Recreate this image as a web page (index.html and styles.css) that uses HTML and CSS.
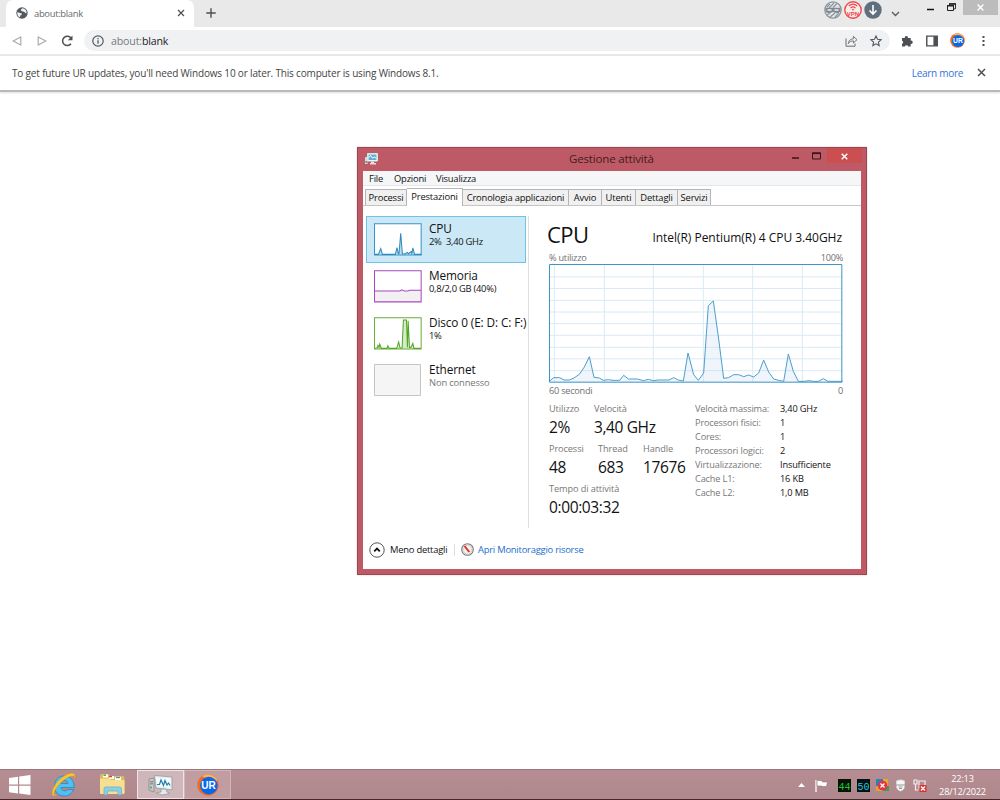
FILE: index.html
```html
<!DOCTYPE html>
<html lang="it">
<head>
  <meta charset="UTF-8">
  <title>about:blank</title>
  <link rel="stylesheet" href="styles.css">
</head>
<body>
  <header class="browser">
    <div class="tab-strip">
      <div class="browser-tab">
        <svg class="globe" width="12" height="12" viewBox="0 0 12 12"><circle cx="6" cy="6" r="5.7" fill="#55595e"/><path d="M1.3 5.4c1.500-.3 2 .8 3.700.8 1.300 0 1.200 1.500 0 1.800s-.5 2-1.200 2.300A5 5 0 0 1 1.300 5.400zM6.500 1.300c-1 .8-1.900 1-1.600 2S6.500 4.400 7.800 4.700 9 6.700 10.600 6A4.800 4.800 0 0 0 6.500 1.300z" fill="#f1f1f1"/></svg>
        <span class="browser-tab-title">about:blank</span>
        <svg width="8" height="8" viewBox="0 0 8 8"><path d="M1 1l6 6M7 1L1 7" stroke="#4c4f53" stroke-width="1.2"/></svg>
      </div>
      <svg class="new-tab" width="10" height="10" viewBox="0 0 10 10"><path d="M5 .3v9.4M.3 5h9.4" stroke="#4c4f53" stroke-width="1.4"/></svg>
      <div class="strip-icons">
        <svg width="18" height="18" viewBox="0 0 18 18"><circle cx="9" cy="9" r="8.2" fill="#e3e6e8" stroke="#8a949d" stroke-width="1.2"/><path d="M3 6l3-3M5 7l5-5M9 6.500l4-4M3 14l3-2M6 16l5-4M11 16l4-4" stroke="#8a949d" stroke-width="1.2"/><path d="M1.500 6.800h15v3.700c-2 2-5 2-7.500.3-2.500 1.700-5.500 1.700-7.500-.3z" fill="#7f8a93"/><path d="M3.500 9h4M10.500 9h4" stroke="#eef0f1" stroke-width="1.6"/></svg>
        <svg width="18" height="18" viewBox="0 0 18 18"><circle cx="9" cy="9" r="8.2" fill="#f7eded" stroke="#f04848" stroke-width="1.4"/><path d="M4.800 5c2.500-2.300 5.900-2.300 8.400 0M6.500 7.100c1.500-1.400 3.500-1.400 5 0" fill="none" stroke="#f04848" stroke-width="1.2"/><circle cx="9" cy="8.600" r=".9" fill="#f04848"/><text class="vpn" x="9" y="15" text-anchor="middle">VPN</text></svg>
        <svg width="18" height="18" viewBox="0 0 18 18"><circle cx="9" cy="9" r="8.700" fill="#5f6f7d"/><path d="M9 4v9M5.500 9.500L9 13l3.500-3.500" fill="none" stroke="#fff" stroke-width="1.6"/></svg>
        <svg class="chevron" width="9" height="6" viewBox="0 0 9 6"><path d="M1 1l3.500 3.500L8 1" fill="none" stroke="#5b5e61" stroke-width="1.4"/></svg>
      </div>
      <div class="browser-controls">
        <svg width="7" height="15" viewBox="0 0 7 15"><path d="M0 9.500h7" stroke="#111" stroke-width="1.5"/></svg>
        <svg width="9" height="15" viewBox="0 0 9 15"><path d="M2.500 5.500V3.800h6v5H7" fill="none" stroke="#333"/><path d="M.5 5.500h6v5h-6z" fill="none" stroke="#222"/><path d="M0 5.700h7M2 4h7" stroke="#222" stroke-width="1.4"/></svg>
        <div class="browser-close"><svg width="7" height="7" viewBox="0 0 7 7"><path d="M.6.6l5.800 5.800M6.400.6L.6 6.400" stroke="#fff" stroke-width="1.4"/></svg></div>
      </div>
    </div>

    <div class="toolbar">
      <svg width="10" height="10" viewBox="0 0 10 10"><path d="M8.800 1v8L1.200 5z" fill="none" stroke="#a9abae" stroke-width="1.2"/></svg>
      <svg class="forward" width="10" height="10" viewBox="0 0 10 10"><path d="M1.200 1v8L8.800 5z" fill="none" stroke="#a9abae" stroke-width="1.2"/></svg>
      <svg class="reload" width="12" height="12" viewBox="0 0 12 12"><path d="M10.200 3.300A4.700 4.700 0 1 0 10 8.800" fill="none" stroke="#4c4f53" stroke-width="1.5"/><path d="M11.500.5v4.800H6.800z" fill="#4c4f53"/></svg>
      <div class="omnibox">
        <svg width="12" height="12" viewBox="0 0 12 12"><circle cx="6" cy="6" r="5.2" fill="none" stroke="#55595e" stroke-width="1.2"/><path d="M6 5.300v3.500M6 3v1.300" stroke="#55595e" stroke-width="1.3"/></svg>
        <span class="url"><i>about:</i>blank</span>
        <svg class="share" width="13" height="12" viewBox="0 0 13 12"><path d="M1 3.500v7.700h9V8.500" fill="none" stroke="#686b70"/><path d="M3.300 8.600C3.700 5.300 5.700 3.900 8.400 3.800V1.300L12 4.700 8.400 8V5.900C6 5.900 4.500 6.800 3.300 8.600z" fill="none" stroke="#686b70" stroke-width=".9"/></svg>
        <svg width="12" height="12" viewBox="0 0 12 12"><path d="M6 1l1.500 3.300 3.600.4-2.700 2.400.8 3.500L6 8.800l-3.200 1.800.8-3.500L.9 4.700l3.600-.4z" fill="none" stroke="#55595e" stroke-width="1.1"/></svg>
      </div>
      <svg class="puzzle" width="12" height="12" viewBox="0 0 12 12"><path d="M1 3h2.800a1.600 1.600 0 1 1 3.100 0h2.800v2.700a1.600 1.600 0 1 1 0 3.100v2.700H7.200a1.700 1.700 0 0 0-3.300 0H1V8.800a1.600 1.600 0 0 0 0-3.100z" fill="#4c4f53"/></svg>
      <svg class="side-panel" width="12" height="12" viewBox="0 0 11 11"><path d="M.7 1h9.600v9H.7z" fill="#fff" stroke="#4c4f53" stroke-width="1.3"/><path d="M6.800 1h3.500v9H6.800z" fill="#4c4f53"/></svg>
      <svg class="avatar" width="15" height="15" viewBox="0 0 22 22"><circle cx="11" cy="11" r="10.700" fill="#f26b21"/><path d="M5 2.200A10.700 10.700 0 0 1 20.500 6L18 8z" fill="#ffb05a"/><circle cx="11.800" cy="11.600" r="8.800" fill="#0968e8"/><text class="ur-mark" x="11.600" y="15" text-anchor="middle">UR</text></svg>
      <svg width="3" height="12" viewBox="0 0 3 12"><path d="M.5 1h2v2h-2zM.5 5h2v2h-2zM.5 9h2v2h-2z" fill="#4c4f53"/></svg>
    </div>

    <div class="infobar">
      <span class="info-text">To get future UR updates, you'll need Windows 10 or later. This computer is using Windows 8.1.</span>
      <a class="learn-more">Learn more</a>
      <svg width="9" height="9" viewBox="0 0 9 9"><path d="M1 1l7 7M8 1L1 8" stroke="#4c4f53" stroke-width="1.5"/></svg>
    </div>
  </header>

  <main class="page"></main>

  <section class="window">
    <div class="title-bar">
      <svg class="app-icon" width="13" height="12" viewBox="0 0 13 12"><path d="M0 4h2.500v7H0z" fill="#d5d9da"/><path d="M.5 8h1.500v2H.5z" fill="#5f9b6b"/><path d="M2.500.5h10v7.500h-10z" fill="#fff" stroke="#d5e6eb"/><path d="M3.500 1.500h8v5.500h-8z" fill="#63add0"/><path d="M4 4.500l1.500-2L7.500 5l2-1 2 1.500" fill="none" stroke="#fff"/><path d="M6 8.500h3v1.500h2v1.500H5V10h1z" fill="#dce1e2"/></svg>
      <h1>Gestione attività</h1>
      <div class="window-controls">
        <svg width="7" height="9" viewBox="0 0 7 9"><path d="M0 6h7" stroke="#35181c" stroke-width="1.5"/></svg>
        <svg width="9" height="9" viewBox="0 0 9 9"><path d="M.5 1h8v6h-8z" fill="none" stroke="#35181c"/><path d="M0 1.300h9" stroke="#35181c" stroke-width="1.6"/></svg>
        <div class="window-close"><svg width="7" height="7" viewBox="0 0 7 7"><path d="M.7.7l5.600 5.600M6.300.7L.7 6.300" stroke="#fff" stroke-width="1.4"/></svg></div>
      </div>
    </div>

    <div class="window-body">
      <nav class="menu"><span class="m-file">File</span><span class="m-options">Opzioni</span><span>Visualizza</span></nav>
      <div class="tabs">
        <div class="tab t1">Processi</div>
        <div class="tab t2 active">Prestazioni</div>
        <div class="tab t3">Cronologia applicazioni</div>
        <div class="tab t4">Avvio</div>
        <div class="tab t5">Utenti</div>
        <div class="tab t6">Dettagli</div>
        <div class="tab t7">Servizi</div>
      </div>

      <div class="content">
        <aside class="resources">
          <div class="resource selected">
            <svg width="48" height="33" viewBox="42 39 142 96"><path class="plot" d="M43.500 40.500h138v92h-138z" fill="#fff" stroke="#3b93c5"/><path class="plot" d="M44 131h11l7-17 5 17h38l5-20 4 18h2l5-60 5 60 7 1 8-5 3 4 8-6 2 5 3-16 5 19h21" fill="#bddcea" stroke="#2f8bbf"/></svg>
            <div class="resource-text"><h2>CPU</h2><p>2%&nbsp; 3,40 GHz</p></div>
          </div>
          <div class="resource">
            <svg width="48" height="33" viewBox="42 180 142 96"><path d="M43.500 241h75l5-3 8 3h10l5-2h35v34h-138z" fill="#f3f0f4"/><path class="plot" d="M43.500 181.500h138v92h-138zM44 241h75l5-3 8 3h10l5-2h35" fill="none" stroke="#a848bf"/></svg>
            <div class="resource-text"><h2>Memoria</h2><p>0,8/2,0 GB (40%)</p></div>
          </div>
          <div class="resource">
            <svg width="48" height="33" viewBox="42 321 142 96"><path class="plot" d="M43.500 322.500h138v92h-138z" fill="#fff" stroke="#69ad3b"/><path class="plot" d="M44 413l8-2 2-7 3 6 2-10 5 13h16l3-8 4 8h22l6-19 4 18h6l4-83h9l3 81 2-79 4 80 5-2 5-11 3 15h20" fill="#d5eac9" stroke="#51a624"/></svg>
            <div class="resource-text"><h2>Disco 0 (E: D: C: F:)</h2><p>1%</p></div>
          </div>
          <div class="resource">
            <svg width="48" height="33" viewBox="0 0 48 33"><path d="M.5.5h46v31H.5z" fill="#f5f5f5" stroke="#c5c5c5"/></svg>
            <div class="resource-text"><h2>Ethernet</h2><p class="off">Non connesso</p></div>
          </div>
        </aside>

        <div class="details">
          <div class="details-head"><h3>CPU</h3><span>Intel(R) Pentium(R) 4 CPU 3.40GHz</span></div>
          <div class="axis"><span>% utilizzo</span><span>100%</span></div>
          <svg class="graph" width="294" height="119" viewBox="27 27 882 357">
            <path d="M29 65.500h876M29 100.500h876M29 136h876M29 171h876M29 206h876M29 241h876M29 277h876M29 311.500h876M29 347h876M43 29v352M193 29v352M340 29v352M490 29v352M638 29v352M787 29v352" fill="none" stroke="#d9eaf4" stroke-width="3"/>
            <path d="M29 378l12-10h18l13 7h16l14-6 16-11 15-22 15-31 14 62 16 2 12 7 15-2 14 2h20l12-15 14 11h28l17 5 15-4 15 4 15-2h32l14-7 14 7 15 3 14-84 17 65 14 17 16-22 14-202 15-14 16 114 15 118 15-2 15-9h15l15 6 15-5 15 6 15-12 15-39 15 36 15 21 15 4 15 3 14-82 15 52 15 30h18l14-2 14 2h14l15-8 14 8h44v4H29z" fill="#bed8ea" fill-opacity=".25"/>
            <path class="plot" d="M29 378l12-10h18l13 7h16l14-6 16-11 15-22 15-31 14 62 16 2 12 7 15-2 14 2h20l12-15 14 11h28l17 5 15-4 15 4 15-2h32l14-7 14 7 15 3 14-84 17 65 14 17 16-22 14-202 15-14 16 114 15 118 15-2 15-9h15l15 6 15-5 15 6 15-12 15-39 15 36 15 21 15 4 15 3 14-82 15 52 15 30h18l14-2 14 2h14l15-8 14 8h44" fill="none" stroke="#4c9fcd"/>
            <path class="plot" d="M28.500 28.500h877v353h-877z" fill="none" stroke="#3e94c5"/>
          </svg>
          <div class="axis below"><span>60 secondi</span><span>0</span></div>
          <div class="stats">
            <div class="stats-main">
              <div class="stat-row">
                <div class="stat s-use"><label>Utilizzo</label><b>2%</b></div>
                <div class="stat"><label>Velocità</label><b>3,40 GHz</b></div>
              </div>
              <div class="stat-row">
                <div class="stat s-proc"><label>Processi</label><b>48</b></div>
                <div class="stat s-thread"><label>Thread</label><b>683</b></div>
                <div class="stat"><label>Handle</label><b>17676</b></div>
              </div>
              <div class="stat-row">
                <div class="stat"><label>Tempo di attività</label><b>0:00:03:32</b></div>
              </div>
            </div>
            <dl class="specs">
              <dt>Velocità massima:</dt><dd>3,40 GHz</dd>
              <dt>Processori fisici:</dt><dd>1</dd>
              <dt>Cores:</dt><dd>1</dd>
              <dt>Processori logici:</dt><dd>2</dd>
              <dt>Virtualizzazione:</dt><dd>Insufficiente</dd>
              <dt>Cache L1:</dt><dd>16 KB</dd>
              <dt>Cache L2:</dt><dd>1,0 MB</dd>
            </dl>
          </div>
        </div>
      </div>

      <footer class="window-footer">
        <svg width="16" height="16" viewBox="0 0 16 16"><circle cx="8" cy="8" r="7.200" fill="#fff" stroke="#555"/><path d="M5.200 9.300L8 6.500l2.800 2.800" fill="none" stroke="#111" stroke-width="1.8"/></svg>
        <span class="less">Meno dettagli</span>
        <i class="divider"></i>
        <svg width="13" height="13" viewBox="0 0 13 13"><circle cx="6.500" cy="6.500" r="5.800" fill="#f5f2ec" stroke="#777" stroke-width="1.1"/><circle cx="6.500" cy="6.500" r="4.300" fill="none" stroke="#b9b2a8" stroke-dasharray="1 1"/><path d="M3.500 3l4.800 6" stroke="#df302d" stroke-width="2"/></svg>
        <a>Apri Monitoraggio risorse</a>
      </footer>
    </div>
  </section>

  <div class="taskbar">
    <div class="task start"><svg width="22" height="20" viewBox="0 0 22 20"><path d="M0 3l9-1.300v7.800H0zM10.200 1.500L21.500 0v9.500H10.200zM0 10.700h9v7.800L0 17.200zM10.200 10.700h11.300V20l-11.300-1.500z" fill="#fff"/></svg></div>
    <div class="task ie"><svg width="26" height="26" viewBox="0 0 26 26"><path d="M22.800 17.500C21 21.500 17.700 24 13.200 24 7.300 24 3.500 20 3.500 14.200S7.500 4 13.200 4s10 4 10 11.500H10c.2 2 1.600 3.300 3.800 3.300 1.500 0 2.500-.4 3.200-1.300zM10 11.500h7c-.2-2-1.500-3-3.400-3s-3.300 1-3.600 3z" fill="#4fc0f0" stroke="#2389c6" stroke-width=".8"/><path d="M2 23.500C-1.500 20 5.500 9 12.500 4.500S25.500 0 23.700 6.500C24.500 3 19.500 3.200 13.500 7.500S3 18.500 3 21.500c0 1 1 1.700 3 .8-1.300 1.300-3 2-4 1.200z" fill="#fbc62c" stroke="#dd9d1c" stroke-width=".5"/></svg></div>
    <div class="task folder"><svg width="25" height="23" viewBox="0 0 25 23"><path d="M0 2.500Q0 1 1.500 1H8l2 2h13q1.500 0 1.500 1.500V20q0 1-1.500 1H1.500Q0 21 0 20z" fill="#dfbb56"/><path d="M3 1.500h5v3H3z" fill="#fff"/><path d="M3.500 1.500H6V3H3.500z" fill="#3bb44a"/><path d="M9 3h5v3H9z" fill="#fff"/><path d="M9 3h3v1.300H9z" fill="#d3472f"/><path d="M15 4h6v3h-6z" fill="#fff"/><path d="M16 4h4v1.200h-4z" fill="#4b91ce"/><path d="M0 5.500h9l2 1.500h13.500V20q0 1-1.500 1H1.500Q0 21 0 20z" fill="#f6df8e"/><path d="M4 22v-6q0-2 2-2h13.500q2 0 2 2v6H18v-4H7.500v4z" fill="#8bcfe7" stroke="#5eaed0" stroke-width=".7"/></svg></div>
    <div class="task open manager"><svg width="25" height="22" viewBox="0 0 25 22"><path d="M1 5l5-1v14l-5-2z" fill="#c6cccd" stroke="#7d8385" stroke-width=".7"/><path d="M2 8l3-.5M2 10l3-.3" stroke="#777"/><path d="M2 12.500h2v2H2z" fill="#52b265"/><path d="M6.500 1.500L24 3v13L8 14z" fill="#e9eded" stroke="#8d9699" stroke-width=".7"/><path d="M8 3.500l14.300 1v9.300L9.200 12.300z" fill="#f6fcff"/><path d="M9 10.500h2.500L13 6l2.500 5.500L17 6.500l2 4.500 1.500-2 1.500 2.500" fill="none" stroke="#237eaf" stroke-width="1.2"/><path d="M13 15h5l1 3 3 1.500L14 21l-6-2 5-1z" fill="#e4e8e8" stroke="#8d9699" stroke-width=".7"/></svg></div>
    <div class="task open ur"><svg width="22" height="22" viewBox="0 0 22 22"><circle cx="11" cy="11" r="10.700" fill="#f26b21"/><path d="M5 2.200A10.700 10.700 0 0 1 20.500 6L18 8z" fill="#ffb05a"/><circle cx="11.800" cy="11.600" r="8.800" fill="#0968e8"/><text class="ur-mark" x="11.600" y="15" text-anchor="middle">UR</text></svg></div>
    <div class="tray">
      <svg class="tray-up" width="7" height="4" viewBox="0 0 7 4"><path d="M3.500 0L7 4H0z" fill="#fff"/></svg>
      <svg class="flag" width="13" height="13" viewBox="0 0 13 13"><path d="M1 1v12" stroke="#f5eeee" stroke-width="1.5"/><path d="M2 1.500h4.500L7.500 3h5L11.500 7.500H7.500L6.500 7H2z" fill="#fff" stroke="#917277" stroke-width=".6"/></svg>
      <svg class="meter" width="13" height="13" viewBox="0 0 13 13"><path d="M0 0h13v13H0z" fill="#071207"/><text class="digits" x="6.500" y="10.500" text-anchor="middle" fill="#16c936">44</text></svg>
      <svg class="meter" width="13" height="13" viewBox="0 0 13 13"><path d="M0 0h13v13H0z" fill="#061013"/><text class="digits" x="6.500" y="10.500" text-anchor="middle" fill="#22c9df">50</text></svg>
      <svg class="multi" width="13" height="13" viewBox="0 0 13 13"><path d="M0 0h7v7H0z" fill="#2883bd"/><path d="M7 0h5v7H7z" fill="#e9a826"/><path d="M0 7h6v5H0z" fill="#e5a129"/><path d="M7 7h6v5H7z" fill="#4d9551"/><circle cx="6.500" cy="6.500" r="4.800" fill="#df3544"/><path d="M4.500 4.500l4 4M8.500 4.500l-4 4" stroke="#fff" stroke-width="1.2"/></svg>
      <svg class="shield" width="11" height="13" viewBox="0 0 11 13"><path d="M1 1.500q4.500-2 9 0v5q0 4.500-4.500 6Q1 11 1 6.500z" fill="#f6f6f6" stroke="#a69b9d" stroke-width=".7"/><path d="M1 6h9M3.500 8h4M4 9.500h3" stroke="#999"/></svg>
      <svg class="network" width="14" height="13" viewBox="0 0 14 13"><path d="M1 1h3v4H1zM2.500 5v6h3M6 2h6v7H6z" fill="none" stroke="#f4eded" stroke-width="1.2"/><path d="M6.500 6h7v7h-7z" fill="#df3030"/><path d="M8 7.500l4 4M12 7.500l-4 4" stroke="#fff" stroke-width="1.4"/></svg>
      <div class="clock"><span>22:13</span><span>28/12/2022</span></div>
    </div>
  </div>
</body>
</html>
```
FILE: styles.css
```css
* {
  box-sizing: border-box;
}
body {
  margin: 0;
  width: 1000px;
  height: 800px;
  overflow: hidden;
  display: flex;
  flex-direction: column;
  position: relative;
  background: #fff;
  font-family: "Open Sans", "Noto Sans", sans-serif;
  font-size: 10px;
  color: #222;
}
svg {
  display: block;
  flex: none;
}
span, a, h1, h2, h3, p, label, b {
  white-space: nowrap;
}
h1, h2, h3, p, dl, dd {
  margin: 0;
  font-weight: normal;
}
.plot {
  stroke-width: 3;
}

/* Browser */
.tab-strip {
  height: 27px;
  padding-left: 6px;
  display: flex;
  background: #e9e9e9;
}
.browser-tab {
  width: 188px;
  height: 27px;
  padding: 0 9px 1px 10px;
  display: flex;
  align-items: center;
  background: #fff;
  border-radius: 7px 7px 0 0;
}
.browser-tab-title {
  flex: 1;
  margin-left: 6px;
  font-size: 9.4px;
  letter-spacing: -0.3px;
  color: #66696d;
}
.new-tab {
  margin: 8px 0 0 12px;
}
.strip-icons {
  display: flex;
  gap: 2px;
  margin: 1px 0 0 auto;
}
.chevron {
  margin: 10px 0 0 7px;
}
.browser-controls {
  display: flex;
  margin-left: 27px;
  gap: 13px;
}
.browser-close {
  width: 35px;
  height: 15px;
  margin: 0 2px 0 -6px;
  display: flex;
  align-items: center;
  justify-content: center;
  background: #bcbcbc;
}
.toolbar {
  height: 29px;
  padding: 0 15px 0 12px;
  display: flex;
  align-items: center;
  border-bottom: 2px solid #e7e8e9;
}
.forward {
  margin-left: 15px;
}
.reload {
  margin: 0 11px 0 14px;
}
.omnibox {
  width: 806px;
  height: 21px;
  padding: 0 8px;
  display: flex;
  align-items: center;
  background: #f0f1f3;
  border-radius: 11px;
}
.url {
  flex: 1;
  margin-left: 7px;
  font-size: 10.6px;
  letter-spacing: -0.15px;
}
.url i {
  font-style: normal;
  color: #777a7e;
}
.share {
  margin-right: 12px;
}
.puzzle {
  margin-left: 11px;
}
.side-panel {
  margin: 0 12px 0 13px;
}
.avatar {
  margin-right: auto;
}
.infobar {
  height: 36px;
  padding: 0 14px 1px 12px;
  display: flex;
  align-items: center;
  border-bottom: 2px solid #b7bab8;
  box-shadow: 0 1px 2px #ddd;
}
.info-text {
  flex: 1;
  font-size: 10px;
  letter-spacing: -0.17px;
  color: #444;
}
.learn-more {
  margin-right: 14px;
  font-size: 10px;
  letter-spacing: -0.3px;
  color: #3474dc;
}
.page {
  flex: 1;
}

/* Task manager window */
.window {
  position: absolute;
  left: 357px;
  top: 147px;
  width: 510px;
  height: 428px;
  padding: 0 5px 5px;
  background: #bd5a65;
  border: 1px solid #9e4550;
  box-shadow: 0 0 2px #ccc;
}
.title-bar {
  height: 23px;
  display: flex;
}
.app-icon {
  margin: 5px 0 0 2px;
}
.title-bar h1 {
  flex: 1;
  margin: 1px 0 0 191px;
  font-size: 11.5px;
  line-height: 19px;
  letter-spacing: -0.15px;
  color: #431d22;
}
.window-controls {
  display: flex;
  gap: 13px;
  margin-right: -1px;
  padding-top: 4px;
}
.window-close {
  width: 35px;
  height: 15px;
  margin: -4px 0 0 -7px;
  display: flex;
  align-items: center;
  justify-content: center;
  background: #cb4e50;
}
.window-close svg {
  margin-top: 1px;
}
.window-body {
  height: 398px;
  display: flex;
  flex-direction: column;
  background: #fff;
  color: #111;
}
.menu {
  height: 15px;
  padding-left: 6px;
  display: flex;
  background: #f5f6f7;
  border-bottom: 1px solid #e5e6e7;
  font-size: 9.4px;
  line-height: 15px;
  letter-spacing: -0.2px;
}
.m-file {
  width: 25px;
}
.m-options {
  width: 42px;
}
.tabs {
  height: 20px;
  padding-left: 2px;
  display: flex;
  align-items: flex-end;
  border-bottom: 1px solid #c5c5c5;
}
.tab {
  height: 16px;
  border: 1px solid #b5b5b5;
  border-left: 0;
  border-bottom: 0;
  background: #f0f0f0;
  font-size: 9.4px;
  line-height: 16px;
  letter-spacing: -0.17px;
  text-align: center;
  white-space: nowrap;
}
.t1 { width: 42px; border-left: 1px solid #b5b5b5; }
.t2 { width: 56px; }
.t3 { width: 106px; }
.t4 { width: 33px; }
.t5 { width: 34px; }
.t6 { width: 42px; }
.t7 { width: 33px; }
.tab.active {
  height: 18px;
  margin-bottom: -1px;
  background: #fff;
}
.content {
  height: 326px;
  display: flex;
}
.resources {
  width: 166px;
  height: 312px;
  margin-top: 10px;
  padding-left: 3px;
  border-right: 1px solid #dedede;
}
.resource {
  width: 160px;
  height: 47px;
  padding: 7px 0 0 8px;
  display: flex;
}
.resource.selected {
  outline: 1px solid #70c2e6;
  outline-offset: -1px;
  background: #cbe8f6;
}
.resource-text {
  margin: -1px 0 0 7px;
}
.resource h2 {
  font-size: 11.8px;
  line-height: 13px;
  letter-spacing: -0.12px;
}
.resource p {
  font-size: 9.4px;
  line-height: 13px;
  letter-spacing: -0.27px;
}
.resource p.off {
  color: #777;
  letter-spacing: -0.15px;
}
.details {
  width: 294px;
  margin-left: 20px;
}
.details-head {
  height: 45px;
  padding: 13px 1px 0 0;
  margin-left: -2px;
  display: flex;
  justify-content: space-between;
}
.details-head h3 {
  font-size: 22px;
  line-height: 30px;
  letter-spacing: -0.6px;
}
.details-head span {
  padding-top: 9px;
  font-size: 12px;
  line-height: 20px;
  letter-spacing: -0.03px;
}
.axis {
  height: 13px;
  display: flex;
  justify-content: space-between;
  font-size: 9.2px;
  line-height: 13px;
  letter-spacing: -0.25px;
  color: #707070;
}
.axis.below {
  height: 19px;
  line-height: 15px;
}
.stats {
  display: flex;
}
.stats-main {
  width: 146px;
}
.stat-row {
  height: 40px;
  display: flex;
}
.stat label, .stat b {
  display: block;
}
.stat label {
  font-size: 9.2px;
  line-height: 13px;
  letter-spacing: -0.1px;
  color: #777;
}
.stat b {
  font-size: 15.5px;
  font-weight: normal;
  line-height: 24px;
  letter-spacing: -0.38px;
}
.s-use { width: 45px; }
.s-proc { width: 49px; }
.s-thread { width: 45px; }
.specs {
  display: grid;
  grid-template-columns: 85px 62px;
  grid-auto-rows: 14px;
  align-content: start;
  font-size: 9.2px;
  line-height: 13px;
  letter-spacing: -0.15px;
  white-space: nowrap;
}
.specs dt {
  color: #777;
}
.window-footer {
  flex: 1;
  padding: 0 0 2px 6px;
  display: flex;
  align-items: center;
  font-size: 9.4px;
  letter-spacing: -0.22px;
}
.less {
  width: 64px;
  margin-left: 5px;
}
.divider {
  width: 1px;
  height: 12px;
  margin-right: 6px;
  background: #ddd;
}
.window-footer a {
  margin-left: 4px;
  color: #1b6dcc;
}

/* Taskbar */
.taskbar {
  height: 31px;
  display: flex;
  background: linear-gradient(#b68d92, #ae888c);
  border-top: 1px solid #9a777c;
  border-bottom: 1px solid #4b242b;
}
.task {
  height: 29px;
  display: flex;
  align-items: center;
  justify-content: center;
}
.start { width: 39px; }
.ie { width: 49px; }
.folder { width: 48px; }
.open {
  width: 47px;
  border: 1px solid #ceb6b9;
  background: #c19ca1;
}
.manager {
  background: #ceb6ba;
  border-color: #eee4e5;
  margin-left: 1px;
}
.tray {
  flex: 1;
  padding-right: 14px;
  display: flex;
  justify-content: flex-end;
  align-items: center;
}
.tray svg {
  margin-top: 1px;
}
.tray-up { margin-right: 10px; }
.flag { margin-right: 10px; }
.meter { margin-right: 6px; }
.multi { margin-right: 6px; }
.shield { margin-right: 7px; }
.network { margin-right: 12px; }
.clock {
  width: 47px;
  display: flex;
  flex-direction: column;
  align-items: center;
  font-size: 9.2px;
  line-height: 13px;
  letter-spacing: -0.2px;
  color: #fff;
}
.vpn {
  font: bold 6px "Liberation Sans", sans-serif;
  fill: #f04848;
}
.digits {
  font: 10px "Liberation Mono", monospace;
}
.ur-mark {
  font: bold 10px "Liberation Sans", sans-serif;
  fill: #fff;
}
```
